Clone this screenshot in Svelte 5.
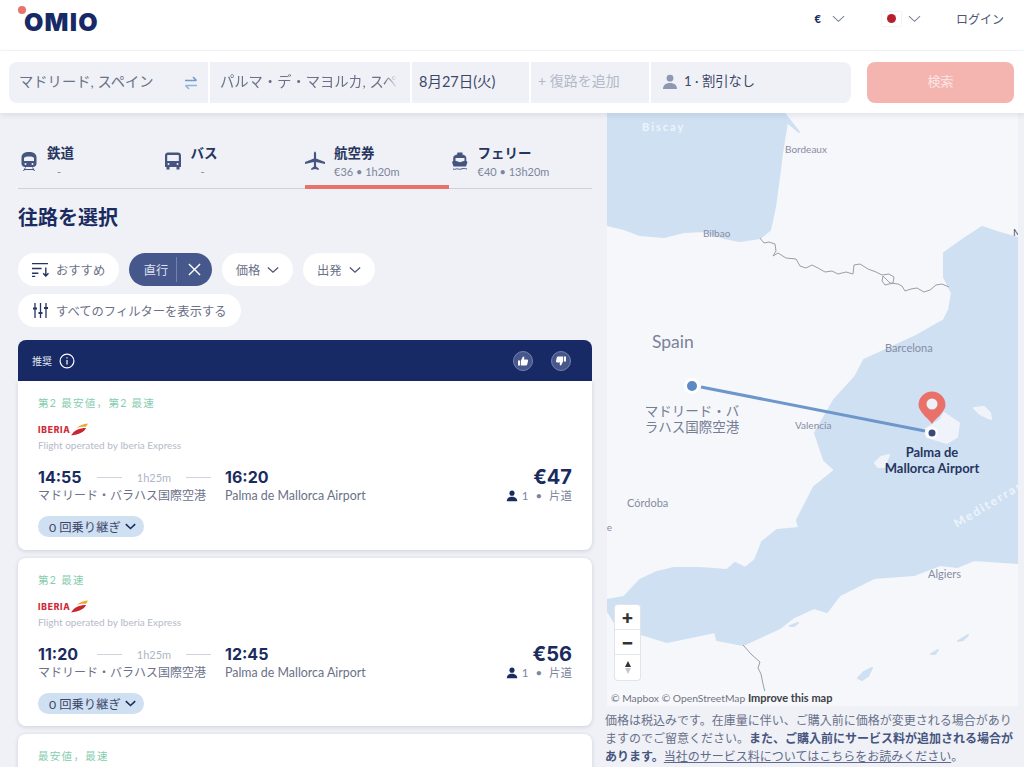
<script lang="ts">
  const tabs = [
    { name: '鉄道', sub: '-', icon: 'train' },
    { name: 'バス', sub: '-', icon: 'bus' },
    { name: '航空券', sub: '€36 • 1h20m', icon: 'plane', active: true },
    { name: 'フェリー', sub: '€40 • 13h20m', icon: 'ferry' }
  ];

  const flights = [
    { tag: '第2 最安値，第2 最速', dep: '14:55', arr: '16:20', price: '€47' },
    { tag: '第2 最速', dep: '11:20', arr: '12:45', price: '€56' },
    { tag: '最安値，最速', dep: '07:10', arr: '08:30', price: '€36' }
  ];

  const water = [
    'M607 113H784L799 132L787 122L782 153L780 170L775 207L770 230L760 238L740 241L724 238L704 231L684 232L664 237L640 235L624 229L607 225Z',
    'M1018 238L1000 233L982 227L965 238L944 253L944 277L952 293L949 310L944 320L914 337L864 360L855 377L834 400L815 433L824 460L835 470L814 487L797 520L799 528L777 530L762 542L755 560L745 568L735 563L727 570L700 568L674 568L657 572L640 580L624 597L607 600V610L615 623L638 633L667 642L715 632L717 640L743 645L780 628L794 617L814 608L827 612L840 595L874 578L914 575L940 565L957 567L974 560L1018 563Z'
  ];
  const land = [
    'M924 430L940 420L944 413L959 423L957 437L947 443L927 437Z',
    'M974 408L984 407L990 413L991 419L980 414Z',
    'M875 463L881 457L889 455L884 467L878 467Z'
  ];
  const lakes = [
    'M858 678L864 672L872 668L868 676L862 680Z',
    'M931 654L938 650L935 654Z',
    'M958 641L968 635L963 640Z',
    'M790 626L798 623L794 626Z'
  ];
  const borderA = '760 238 764 243 769 242 775 244 776 251 773 256 778 253 786 258 796 259 800 266 806 268 812 265 818 268 825 272 832 271 838 274 846 272 853 274 854 265 860 264 868 269 876 272 882 275 889 274 894 277 893 283 885 285 882 281 883 276 890 283 898 284 902 286 905 291 911 289 917 288 924 292 930 290 936 285 942 284 949 287';
  const borderB = '743 645 752 655 760 662 758 668 761 674 763 684 765 692';
</script>

{#snippet chevron(cls)}
  <svg class={cls} viewBox="0 0 14 8"><path d="M1 1l6 5.6L13 1" /></svg>
{/snippet}

{#snippet person(cls)}
  <svg class={cls} viewBox="0 0 16 16"><circle cx="8" cy="4.2" r="3.4" /><path d="M1 15c0-4 3-6 7-6s7 2 7 6z" /></svg>
{/snippet}

{#snippet modeIcon(kind)}
  <svg class="mode-icon" viewBox="0 0 22 22">
    {#if kind === 'train'}
      <path d="M11 2c4.500 0 7.500 1.800 7.500 5.500v6c0 2-1.500 3.500-3.500 3.500H7c-2 0-3.500-1.500-3.500-3.500v-6C3.500 3.800 6.500 2 11 2z" />
      <path class="cut" d="M6 8c1.500-1.900 8.500-1.900 10 0v3H6z" />
      <circle class="cut" cx="7.500" cy="14" r="1" /><circle class="cut" cx="14.500" cy="14" r="1" />
      <path class="rail" d="M6 19.500h10M7.500 17.500l-2 3.500M14.500 17.500l2 3.500" />
    {:else if kind === 'bus'}
      <path d="M6 2.500h10c1.700 0 3 1.200 3 3V17h-1.500v2.500h-3V17h-7v2.500h-3V17H3V5.500c0-1.800 1.300-3 3-3z" />
      <path class="cut" d="M5.200 6c0-.6.400-1 1-1h9.600c.6 0 1 .4 1 1v5H5.200z" />
      <circle class="cut" cx="6.500" cy="14" r="1" /><circle class="cut" cx="15.500" cy="14" r="1" />
    {:else if kind === 'plane'}
      <path d="M12 1.500c-.6 0-1.100 1-1.100 2.500v4.600L2 12v1.900l8.900-1.800v4.400L8.200 18.400v1.500l3.800-1 3.800 1v-1.500l-2.700-1.900v-4.400l8.900 1.800V12l-8.900-3.400V4c0-1.500-.5-2.500-1.100-2.500z" transform="translate(-2 0)" />
    {:else}
      <path d="M8.500 3h5v2c2.200.3 3.800 1.700 3.800 3.500v3l1.200 1-1.500 4.500H4.500L3 12.500l1.200-1v-3c0-1.800 1.600-3.200 3.800-3.500z" transform="translate(0 -.5)" />
      <path class="cut" d="M6.500 8h9v2.800L11 12.300l-4.500-1.500z" />
      <path class="rail" d="M4 19c2 .9 3.200-.5 4.500-.2 1.500.5 3 .7 4.500 0 1.500-.7 3-.2 5 .2" />
    {/if}
  </svg>
{/snippet}

<div class="page">
  <header class="top">
    <div class="logo"><span class="logo-dot"></span><span class="logo-text">omio</span></div>
    <nav class="top-nav">
      <span class="currency">€</span>
      {@render chevron('nav-chev')}
      <span class="flag"><span></span></span>
      {@render chevron('nav-chev flag-chev')}
      <span class="login">ログイン</span>
    </nav>
  </header>

  <section class="search">
    <div class="field from">
      <span>マドリード, スペイン</span>
      <svg class="swap" viewBox="0 0 16 14">
        <path class="swap-a" d="M2 4.500h11.500M10 1l3.500 3.500" />
        <path class="swap-b" d="M14 9.500H2.500M6 13L2.500 9.500" />
      </svg>
    </div>
    <div class="field to"><span>パルマ・デ・マヨルカ, スペイン</span></div>
    <div class="field date"><span>8月27日(火)</span></div>
    <div class="field ret"><span>+ 復路を追加</span></div>
    <div class="field pax">{@render person('pax-icon')}<span>1 · 割引なし</span></div>
    <button class="go">検索</button>
  </section>

  <main class="body">
    <div class="results">
      <div class="tabs">
        {#each tabs as t}
          <div class="tab" class:active={t.active}>
            {@render modeIcon(t.icon)}
            <div class="tab-text">
              <strong>{t.name}</strong>
              <small>{t.sub}</small>
            </div>
          </div>
        {/each}
      </div>

      <h1>往路を選択</h1>

      <div class="filters">
        <button class="pill">
          <svg class="pill-icon" viewBox="0 0 16 14"><path d="M0 1.500h15M0 6h9M0 10.500h6M0 13.500h3M13 5v8M10.500 10.500L13 13.200l2.500-2.700" /></svg>
          おすすめ
        </button>
        <button class="pill on"><span>直行</span><i></i>
          <svg class="close" viewBox="0 0 14 14"><path d="M1 1l12 12M13 1L1 13" /></svg>
        </button>
        <button class="pill">価格 {@render chevron('pill-chev')}</button>
        <button class="pill">出発 {@render chevron('pill-chev')}</button>
        <button class="pill">
          <svg class="pill-icon" viewBox="0 0 15 15"><path d="M2 0v15M7.500 0v15M13 0v15" /><path class="knob" d="M0 4.500h4v2H0zM5.500 9h4v2h-4zM11 4h4v2h-4z" /></svg>
          すべてのフィルターを表示する
        </button>
      </div>

      <div class="rec">
        <span>推奨</span>
        <svg class="info" viewBox="0 0 16 16"><circle cx="8" cy="8" r="6.900" /><path d="M8 7v4.500M8 4.200v1.300" /></svg>
        <span class="thumbs">
          <svg viewBox="0 0 20 20"><circle cx="10" cy="10" r="9.500" /><path class="hand" d="M5 9.500h2.200v5H5zM8 9.500l2-4c1.200 0 1.500.9 1.200 2l-.3 1h3c.8 0 1.300.6 1.100 1.400l-.8 3.600c-.2.700-.6 1-1.300 1H8z" /></svg>
          <svg viewBox="0 0 20 20"><circle cx="10" cy="10" r="9.500" /><path class="hand" d="M15 10.500h-2.200v-5H15zM12 10.500l-2 4c-1.200 0-1.500-.9-1.200-2l.3-1h-3c-.8 0-1.300-.6-1.100-1.400l.8-3.600c.2-.7.6-1 1.300-1H12z" /></svg>
        </span>
      </div>

      {#each flights as f}
        <article class="card">
          <div class="tag">{f.tag}</div>
          <div class="carrier">
            <span class="iberia">IBERIA</span>
            <svg class="wing" viewBox="0 0 18 14">
              <path class="wing-r" d="M0 13.500C3 8 9 5.500 16 5.500c-1 3.500-8 7.500-16 8z" />
              <path class="wing-y" d="M6 5.500C9 2.500 13 .8 18 .5c-.4 1.300-1 2.400-2 3.500-4-.2-7 .2-10 1.500z" />
            </svg>
          </div>
          <div class="operated">Flight operated by Iberia Express</div>
          <div class="leg">
            <div class="times">
              <b>{f.dep}</b><i></i><span>1h25m</span><i></i>
            </div>
            <b class="arr">{f.arr}</b>
            <div class="price">{f.price}</div>
            <div class="place">マドリード・バラハス国際空港</div>
            <div class="place latin">Palma de Mallorca Airport</div>
            <div class="trip">{@render person('trip-icon')}1 • 片道</div>
          </div>
          <button class="stops">0 回乗り継ぎ {@render chevron('stops-chev')}</button>
        </article>
      {/each}
    </div>

    <aside class="side">
      <div class="map">
        <svg class="map-svg" viewBox="607 113 411 593">
          {#each water as d}<path class="water" {d} />{/each}
          {#each land as d}<path class="land" {d} />{/each}
          {#each lakes as d}<path class="water" {d} />{/each}
          <polyline class="border" points={borderA} />
          <polyline class="border" points={borderB} />

          <text class="sea" x="642" y="131">Biscay</text>
          <text class="sea med" x="957" y="528" transform="rotate(-31 957 528)">Mediterranean</text>
          <text class="city" x="785" y="153">Bordeaux</text>
          <text class="city" x="703" y="237">Bilbao</text>
          <text class="city wide" x="885" y="352">Barcelona</text>
          <text class="city" x="795" y="429">Valencia</text>
          <text class="city wide" x="627" y="507">Córdoba</text>
          <text class="city" x="584" y="531">Seville</text>
          <text class="city dark" x="1013" y="236">Marseille</text>
          <text class="city algiers" x="928" y="578">Algiers</text>
          <text class="country" x="652" y="348">Spain</text>

          <line class="route" x1="701" y1="387" x2="925" y2="431" />
          <circle class="halo" cx="692" cy="386" r="8" />
          <circle class="origin" cx="692" cy="386" r="5" />
          <circle class="halo" cx="932" cy="433" r="6" />
          <circle class="dest" cx="932" cy="433" r="3.500" />
          <path class="pin" d="M932 424c-2-4-13.500-12-13.500-19a13.500 13.500 0 0 1 27 0c0 7-11.500 15-13.500 19z" />
          <circle class="pin-eye" cx="932" cy="404" r="5.500" />

          <text class="stop-label" text-anchor="middle"><tspan x="692" y="416">マドリード・バ</tspan><tspan x="692" y="432">ラハス国際空港</tspan></text>
          <text class="stop-label dest-label" text-anchor="middle"><tspan x="932" y="457">Palma de</tspan><tspan x="932" y="473">Mallorca Airport</tspan></text>
        </svg>

        <div class="zoom-ctl">
          <button>+</button>
          <button>−</button>
          <button class="compass"><span class="up"></span><span class="down"></span></button>
        </div>
        <div class="attrib">© Mapbox © OpenStreetMap <b>Improve this map</b></div>
      </div>
      <p class="note">
        価格は税込みです。在庫量に伴い、ご購入前に価格が変更される場合がありますのでご留意ください。<b>また、ご購入前にサービス料が追加される場合があります。</b><u>当社のサービス料についてはこちらをお読みください</u>。
      </p>
    </aside>
  </main>
</div>

<style>
  :global(body) {
    margin: 0;
    background: #eff1f6;
  }

  .page {
    height: 767px;
    overflow: hidden;
    background: #eff1f6;
    color: #1a2b5f;
    font-family: "Lato", "Noto Sans CJK JP", sans-serif;
  }

  button {
    font: inherit;
    border: 0;
    padding: 0;
  }

  /* header */
  .top {
    height: 51px;
    box-sizing: border-box;
    background: #fff;
    border-bottom: 1px solid #f6f7fa;
    display: flex;
    align-items: center;
    justify-content: space-between;
    padding: 0 20px 0 18px;
  }

  .logo {
    position: relative;
    height: 36px;
    display: flex;
    align-items: center;
    padding-left: 6px;
    margin-top: -12px;
  }

  .logo-dot {
    position: absolute;
    left: 0;
    top: 5px;
    width: 8px;
    height: 8px;
    border-radius: 50%;
    background: #e8736c;
  }

  .logo-text {
    font-family: "Inter", sans-serif;
    font-weight: 900;
    font-size: 25px;
    letter-spacing: 1.200px;
    text-transform: uppercase;
    color: #172a66;
    margin-top: 6px;
  }

  .top-nav {
    display: flex;
    align-items: center;
    font-size: 12px;
    color: #4d5672;
    margin-top: -13px;
  }

  .currency {
    font-weight: 900;
    font-size: 11px;
    color: #1a2b5f;
  }

  .nav-chev {
    width: 13px;
    height: 8px;
    margin-left: 11px;
    fill: none;
    stroke: #77809a;
    stroke-width: 1.100;
  }

  .flag {
    width: 19px;
    height: 14px;
    margin-left: 37px;
    background: #fff;
    box-shadow: 0 0 2px #d9dce6;
    display: grid;
    place-items: center;
  }

  .flag span {
    width: 9px;
    height: 9px;
    border-radius: 50%;
    background: #b5202c;
  }

  .nav-chev:global(.flag-chev) {
    margin-left: 7px;
  }

  .login {
    margin-left: 35px;
  }

  /* search bar */
  .search {
    position: relative;
    z-index: 2;
    height: 62px;
    box-sizing: border-box;
    background: #fff;
    box-shadow: 0 2px 6px rgba(30, 40, 80, 0.1);
    padding: 11px 10px 10px 9px;
    display: flex;
    gap: 2px;
    font-size: 14.300px;
    color: #6a7188;
  }

  .field {
    background: #eff1f6;
    display: flex;
    align-items: center;
    overflow: hidden;
    white-space: nowrap;
    box-sizing: border-box;
    padding-left: 10px;
    padding-bottom: 5px;
  }

  .from {
    width: 199px;
    border-radius: 8px 0 0 8px;
    justify-content: space-between;
    padding-right: 9px;
  }

  .swap {
    width: 16px;
    height: 14px;
    flex: none;
    fill: none;
    stroke-width: 1.600;
    margin-top: 5px;
  }

  .swap-a {
    stroke: #6f9cd0;
  }

  .swap-b {
    stroke: #8fb4dd;
  }

  .to {
    width: 200px;
  }

  .to span {
    width: 178px;
    overflow: hidden;
    -webkit-mask-image: linear-gradient(90deg, #000 92%, transparent);
    mask-image: linear-gradient(90deg, #000 92%, transparent);
  }

  .date {
    width: 117px;
    padding-left: 7px;
    font-size: 14.500px;
    color: #3c4768;
  }

  .ret {
    width: 118px;
    padding-left: 7px;
    color: #b4b9c9;
    font-size: 14px;
  }

  .pax {
    width: 200px;
    border-radius: 0 8px 8px 0;
    padding-left: 11px;
    font-size: 13.300px;
    color: #3c4768;
    gap: 6px;
  }

  :global(.pax-icon) {
    width: 16px;
    height: 16px;
    fill: #8f98b0;
    margin-top: 3px;
  }

  .go {
    width: 147px;
    margin-left: 14px;
    border-radius: 8px;
    background: #f4b5b1;
    color: #fbe4e3;
    font-size: 13px;
    padding-bottom: 5px;
  }

  /* left column */
  .body {
    display: grid;
    grid-template-columns: 607px 411px;
    align-items: start;
  }

  .results {
    padding: 27px 15px 0 18px;
  }

  .tabs {
    display: grid;
    grid-template-columns: repeat(4, 1fr);
    height: 48px;
    border-bottom: 1px solid #cdd1dc;
    box-sizing: content-box;
  }

  .tab {
    display: flex;
    align-items: center;
    gap: 7px;
    height: 48px;
    box-sizing: border-box;
    position: relative;
    padding-top: 2px;
  }

  .tab.active::after {
    content: "";
    position: absolute;
    left: 0;
    right: 0;
    bottom: -1px;
    height: 4px;
    background: #e8736c;
  }

  .mode-icon {
    width: 22px;
    height: 22px;
    flex: none;
    fill: #46557f;
    margin-top: -8px;
  }

  .mode-icon .cut {
    fill: #eff1f6;
  }

  .mode-icon .rail {
    fill: none;
    stroke: #46557f;
    stroke-width: 1;
  }

  .tab-text {
    display: flex;
    flex-direction: column;
    margin-top: -4px;
  }

  .tab-text strong {
    font-size: 13.500px;
    line-height: 18px;
    color: #26355f;
  }

  .tab-text small {
    font-size: 11px;
    line-height: 20px;
    color: #7d859c;
  }

  .tab:not(.active):nth-child(-n + 2) small {
    padding-left: 10px;
  }

  h1 {
    margin: 14px 0 0;
    font-size: 20px;
    line-height: 28px;
    font-weight: 700;
    color: #1a2b5f;
  }

  .filters {
    display: flex;
    flex-wrap: wrap;
    gap: 8px 9.500px;
    margin-top: 22px;
    width: 400px;
  }

  .pill {
    height: 33px;
    border-radius: 17px;
    background: #fff;
    color: #6a7188;
    font-size: 12.300px;
    padding: 0 14px;
    display: flex;
    align-items: center;
    gap: 7px;
    white-space: nowrap;
  }

  .pill-icon {
    width: 17px;
    height: 15px;
    fill: none;
    stroke: #26355f;
    stroke-width: 1.300;
  }

  .pill-icon .knob {
    fill: #26355f;
    stroke: none;
  }

  .pill.on {
    background: #46578c;
    color: #dfe3ee;
    padding: 0 11px 0 15px;
    gap: 8px;
  }

  .pill.on i {
    width: 1px;
    height: 25px;
    background: #7483ad;
  }

  .close {
    width: 13px;
    height: 13px;
    margin-left: 3px;
    fill: none;
    stroke: #fff;
    stroke-width: 1.500;
  }

  :global(.pill-chev) {
    width: 12px;
    height: 8px;
    fill: none;
    stroke: #4d5672;
    stroke-width: 1.500;
  }

  .rec {
    margin-top: 13px;
    height: 41px;
    background: #172a66;
    border-radius: 8px 8px 0 0;
    color: #e3e6f0;
    font-size: 10px;
    display: flex;
    align-items: center;
    padding: 0 21px 0 14px;
    gap: 7px;
  }

  .info {
    width: 16px;
    height: 16px;
    fill: none;
    stroke: #fff;
    stroke-width: 1.200;
  }

  .thumbs {
    margin-left: auto;
    display: flex;
    gap: 18px;
  }

  .thumbs svg {
    width: 20px;
    height: 20px;
  }

  .thumbs circle {
    fill: #46578c;
    stroke: #7483ad;
    stroke-width: 1;
  }

  .thumbs .hand {
    fill: #fff;
  }

  .card {
    background: #fff;
    border-radius: 0 0 8px 8px;
    box-shadow: 0 1px 4px rgba(30, 40, 80, 0.16);
    height: 169px;
    box-sizing: border-box;
    padding: 15px 20px 0 20px;
    margin-bottom: 8px;
  }

  .card + .card {
    border-radius: 8px;
    height: 168px;
  }

  .tag {
    font-size: 10.500px;
    line-height: 14px;
    color: #86cdaf;
    letter-spacing: 1.300px;
  }

  .carrier {
    display: flex;
    align-items: center;
    height: 16px;
    margin-top: 12px;
  }

  .iberia {
    font-family: "Inter", sans-serif;
    font-size: 8.500px;
    font-weight: 800;
    letter-spacing: 0.800px;
    color: #cf2a36;
  }

  .wing {
    width: 17px;
    height: 13px;
    margin-top: -1px;
  }

  .wing-r {
    fill: #c8252f;
  }

  .wing-y {
    fill: #f0a630;
  }

  .operated {
    font-size: 10px;
    line-height: 14px;
    color: #b5bac9;
  }

  .leg {
    display: grid;
    grid-template-columns: 187px 1fr auto;
    margin-top: 15px;
    align-items: center;
  }

  .times {
    display: flex;
    align-items: center;
    font-size: 11px;
    color: #b0b5c6;
  }

  .times b,
  .arr {
    font-family: "Inter", sans-serif;
    font-size: 16px;
    line-height: 20px;
    font-weight: 700;
    color: #1a2b5f;
  }

  .times b {
    width: 59px;
  }

  .times i {
    width: 25px;
    height: 1px;
    background: #cfd3dd;
  }

  .times span {
    width: 64px;
    text-align: center;
  }

  .price {
    font-family: "Inter", sans-serif;
    font-size: 20px;
    line-height: 20px;
    font-weight: 700;
    text-align: right;
  }

  .place {
    font-size: 12px;
    line-height: 18px;
    color: #6a7188;
  }

  .place.latin {
    font-size: 12.400px;
  }

  .trip {
    display: flex;
    align-items: center;
    justify-content: flex-end;
    gap: 4px;
    font-size: 11.500px;
    line-height: 18px;
    word-spacing: 4px;
    color: #7d859c;
  }

  :global(.trip-icon) {
    width: 12px;
    height: 12px;
    fill: #1a2b5f;
  }

  .stops {
    display: flex;
    align-items: center;
    gap: 4px;
    height: 21px;
    margin-top: 11px;
    padding: 0 8px 0 11px;
    border-radius: 11px;
    background: #cfe0f2;
    color: #3c4768;
    font-size: 12.300px;
  }

  :global(.stops-chev) {
    width: 11px;
    height: 7px;
    fill: none;
    stroke: #1a2b5f;
    stroke-width: 2;
  }

  /* map */
  .map {
    position: relative;
    height: 593px;
    background: #f5f7fb;
    overflow: hidden;
  }

  .map-svg {
    display: block;
    width: 411px;
    height: 593px;
    font-family: "Lato", "Noto Sans CJK JP", sans-serif;
  }

  .water {
    fill: #cfe0f2;
    stroke: #cfe0f2;
    stroke-width: 2;
    stroke-linejoin: round;
  }

  .land {
    fill: #f0f3f9;
    stroke: #f0f3f9;
    stroke-width: 2;
    stroke-linejoin: round;
  }

  .border {
    fill: none;
    stroke: #9a9ea8;
    stroke-width: 1;
  }

  .sea {
    font-size: 11px;
    font-weight: 700;
    letter-spacing: 2px;
    fill: #eef4fb;
  }

  .sea.med {
    font-size: 12px;
  }

  .city {
    font-size: 10px;
    fill: #868ca3;
  }

  .city.wide {
    font-size: 11px;
  }

  .city.dark {
    fill: #4d5672;
  }

  .algiers {
    font-size: 11px;
  }

  .country {
    font-size: 17.500px;
    fill: #7b829b;
  }

  .route {
    stroke: #6d96cb;
    stroke-width: 3;
  }

  .halo {
    fill: #fff;
  }

  .origin {
    fill: #5b8ac4;
  }

  .dest {
    fill: #3b4a78;
  }

  .pin {
    fill: #ea706a;
  }

  .pin-eye {
    fill: #eef2f8;
  }

  .stop-label {
    font-size: 13.500px;
    fill: #767d94;
  }

  .dest-label {
    font-size: 13px;
    font-weight: 700;
    fill: #26355f;
  }

  .zoom-ctl {
    position: absolute;
    left: 8px;
    top: 492px;
    width: 25px;
    background: #fff;
    border-radius: 3px;
    box-shadow: 0 0 0 1px #e1e4ec;
    display: flex;
    flex-direction: column;
  }

  .zoom-ctl button {
    height: 25px;
    background: none;
    font-family: "Inter", sans-serif;
    font-size: 19px;
    font-weight: 700;
    line-height: 25px;
    color: #333;
    border-bottom: 1px solid #e6e8ee;
  }

  .zoom-ctl .compass {
    border: 0;
    display: flex;
    flex-direction: column;
    align-items: center;
    justify-content: center;
    gap: 1px;
  }

  .up,
  .down {
    width: 0;
    height: 0;
    border-left: 3px solid transparent;
    border-right: 3px solid transparent;
  }

  .up {
    border-bottom: 6px solid #333;
  }

  .down {
    border-top: 6px solid #c4c7cf;
  }

  .attrib {
    position: absolute;
    left: 0;
    bottom: 1px;
    width: 232px;
    padding: 0 0 0 4px;
    box-sizing: border-box;
    background: #f7f8fb;
    font-size: 10.300px;
    line-height: 14px;
    color: #6f7483;
    white-space: nowrap;
  }

  .attrib b {
    font-size: 11px;
    color: #3c4048;
  }

  .note {
    margin: 6px 0 0 -2px;
    width: 412px;
    font-size: 12px;
    line-height: 18px;
    color: #67708a;
  }

  .note b {
    color: #46557f;
  }

  .note u {
    color: #5f6a8a;
  }
</style>
